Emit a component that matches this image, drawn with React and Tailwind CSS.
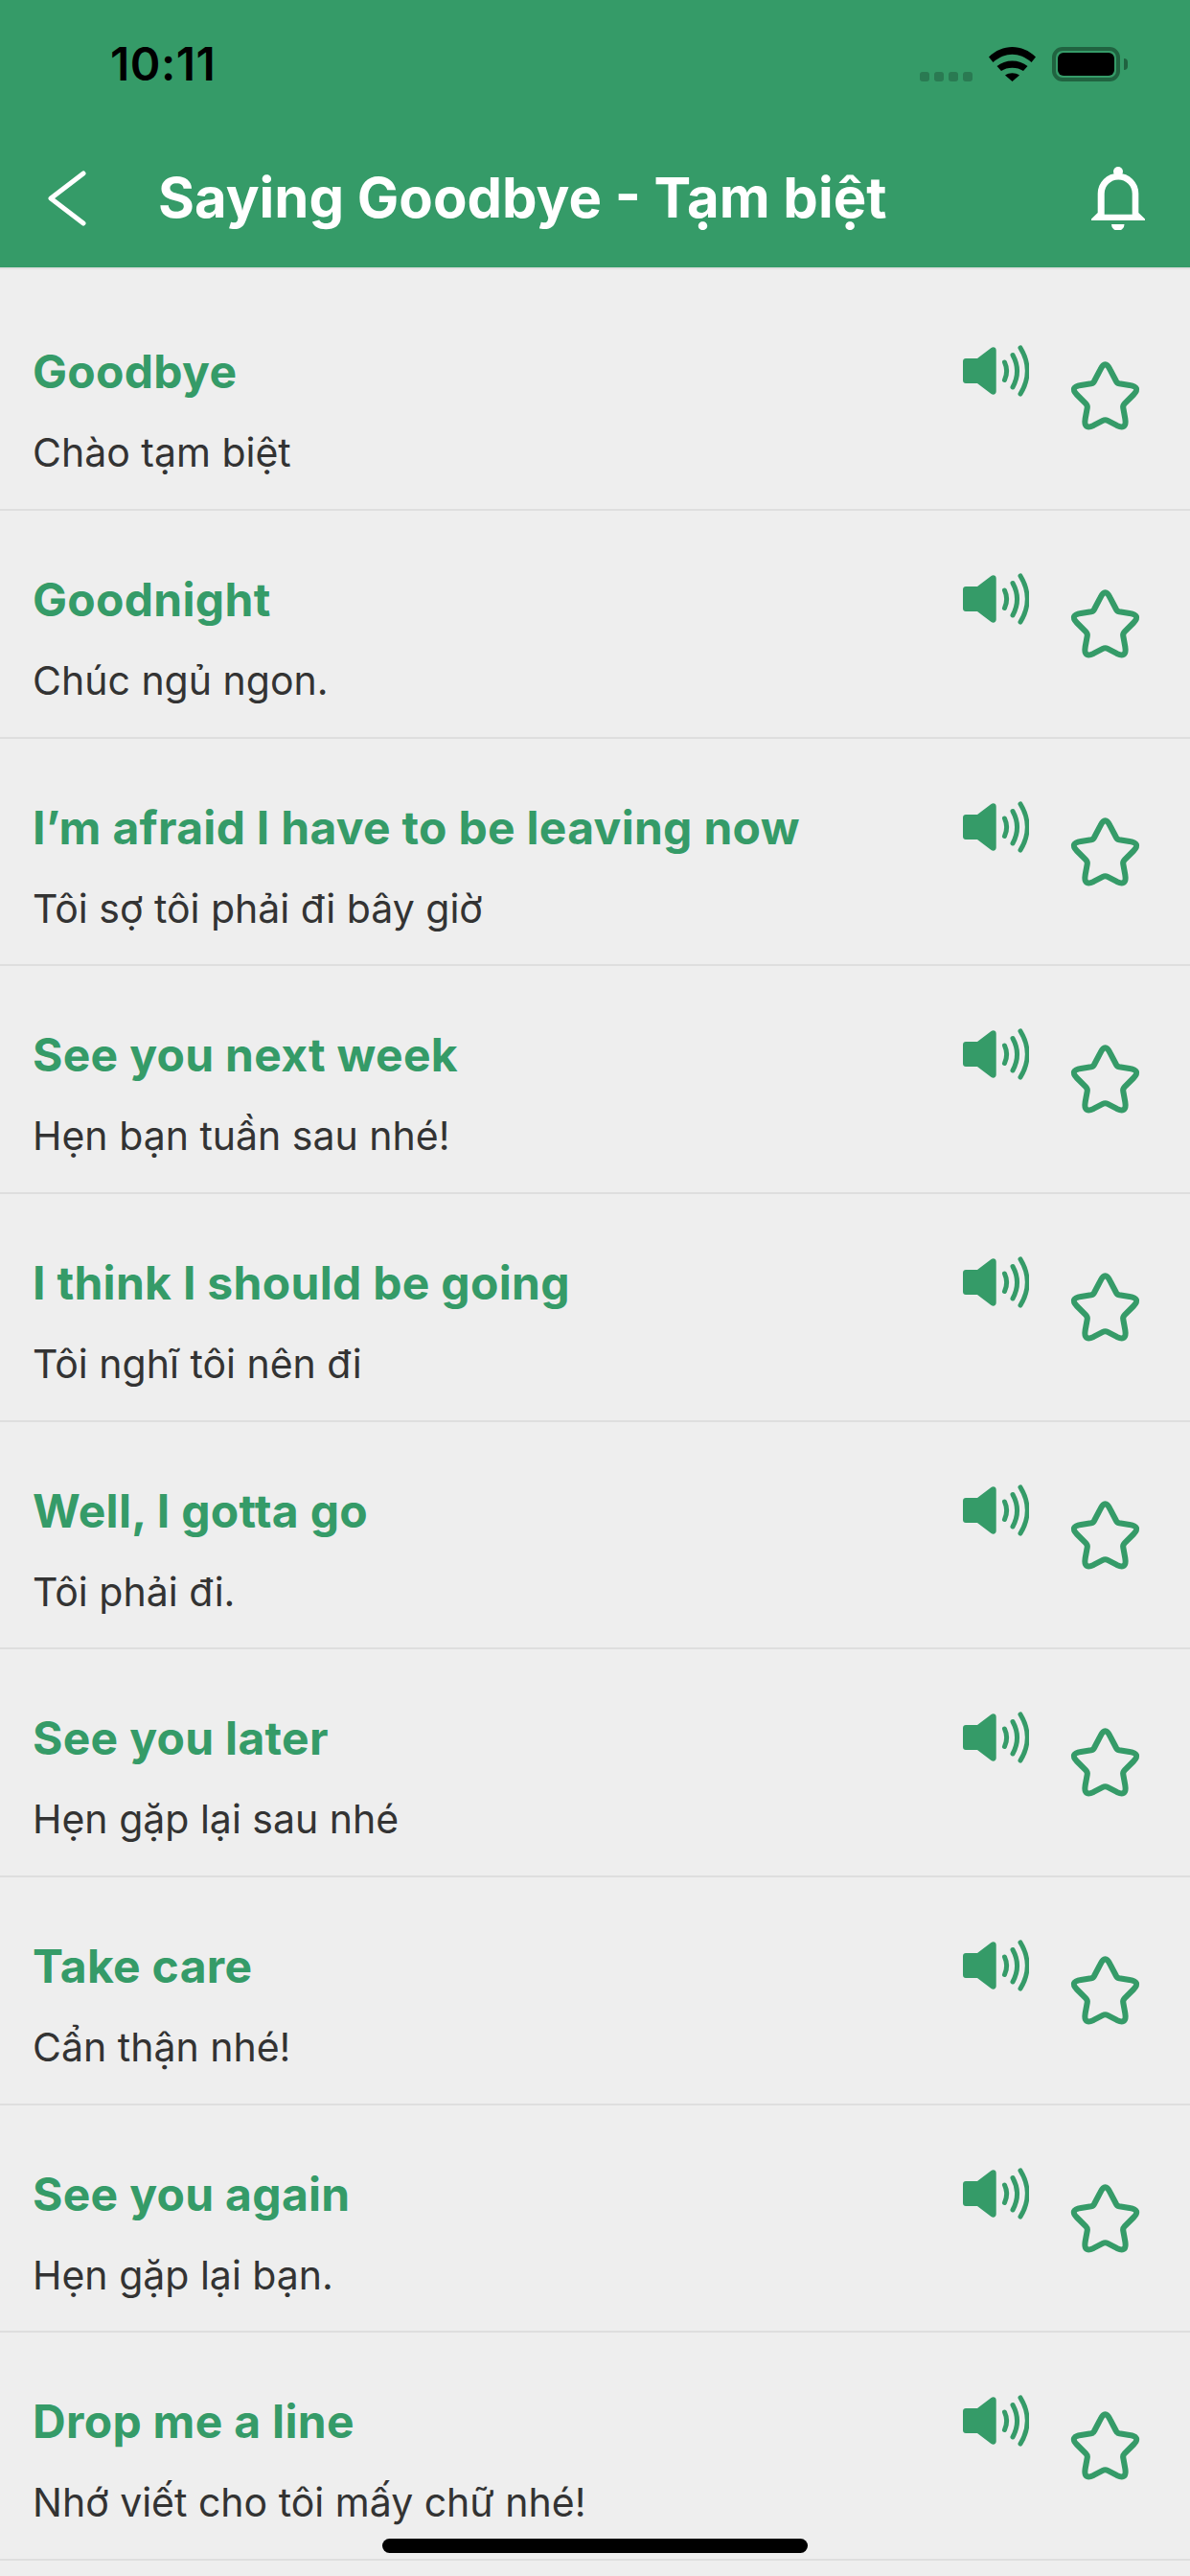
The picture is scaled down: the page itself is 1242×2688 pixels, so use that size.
import React from 'react'

const phrases = [
  ['Goodbye', 'Chào tạm biệt'],
  ['Goodnight', 'Chúc ngủ ngon.'],
  ['I’m afraid I have to be leaving now', 'Tôi sợ tôi phải đi bây giờ'],
  ['See you next week', 'Hẹn bạn tuần sau nhé!'],
  ['I think I should be going', 'Tôi nghĩ tôi nên đi'],
  ['Well, I gotta go', 'Tôi phải đi.'],
  ['See you later', 'Hẹn gặp lại sau nhé'],
  ['Take care', 'Cẩn thận nhé!'],
  ['See you again', 'Hẹn gặp lại bạn.'],
  ['Drop me a line', 'Nhớ viết cho tôi mấy chữ nhé!'],
]

function SpeakerIcon() {
  return (
    <svg viewBox="0 0 69 54" className="w-[69px] h-[54px] mt-[65px] shrink-0 text-[#359b68]" fill="none">
      <path
        d="M3 14h12L29.5 3c2.2-1.6 5.2-.6 5.2 2.4v43.2c0 3-3 4-5.2 2.4L15 40H3c-1.7 0-3-1.3-3-3V17c0-1.7 1.3-3 3-3z"
        fill="currentColor"
      />
      <g stroke="currentColor" strokeWidth="5" strokeLinecap="round">
        <path d="M43.5 18c2.8 6 2.8 12.5 0 18.5" />
        <path d="M52 10.5c6 11 6 22.500 0 33.500" />
        <path d="M60 3c9.500 15.500 9.500 32.500 0 48" />
      </g>
    </svg>
  )
}

function StarIcon() {
  return (
    <svg viewBox="0 0 70 70" className="w-[71px] h-[71px] mt-[83px] ml-[44px] shrink-0 overflow-visible text-[#359b68]" fill="none">
      <path
        d="M30 7.500Q35-3 40 7.500L46 19Q47 21.500 49.500 22L60 23.700Q72 25.500 64 33.500L55 42.500Q53 44.500 53.500 47L55.500 58Q57.500 70 47 65L37.500 60Q35 58.700 32.500 60L23 65Q12.500 70 14.500 58L16.500 47Q17 44.500 15 42.500L6 33.500Q-2 25.500 10 23.700L20.500 22Q23 21.500 24 19Z"
        stroke="currentColor"
        strokeWidth="6"
        strokeLinejoin="round"
      />
    </svg>
  )
}

function PhraseRow({ title, meaning }) {
  return (
    <div className="flex h-[237.67px] items-start border-b-2 border-[#dedede] pl-[34px] pr-[53px]">
      <div className="flex-1 min-w-0">
        <p className="mt-[62px] text-[48px] leading-[62px] font-bold tracking-[0.3px] text-[#359b68]">{title}</p>
        <p className="mt-[27px] text-[41px] leading-[52px] text-[#333333]">{meaning}</p>
      </div>
      <SpeakerIcon />
      <StarIcon />
    </div>
  )
}

function StatusBar() {
  return (
    <div className="flex items-end justify-between pt-[49px] pl-[115px] pr-[65px] h-[85px]">
      <span className="text-[48px] leading-[36px] font-semibold tracking-[0.5px] text-black">10:11</span>
      <div className="flex items-end gap-[17px]">
        <div className="flex gap-[5px]">
          <span className="w-[10px] h-[10px] rounded-[3px] bg-[#2a7a52]" />
          <span className="w-[10px] h-[10px] rounded-[3px] bg-[#2a7a52]" />
          <span className="w-[10px] h-[10px] rounded-[3px] bg-[#2a7a52]" />
          <span className="w-[10px] h-[10px] rounded-[3px] bg-[#2a7a52]" />
        </div>
        <svg viewBox="0 0 49 36" className="w-[49px] h-[36px]" fill="black">
          <path d="M0 10.500C14-3.500 35-3.500 49 10.500L44.500 16C32 5 17 5 4.500 16Z" />
          <path d="M8.500 20C17 12.500 32 12.500 40.500 20L36 25C30 20.500 19 20.500 13 25Z" />
          <path d="M17 29.500C21.500 26.500 27.500 26.500 32 29.500L24.500 36Z" />
        </svg>
        <div className="flex items-center gap-[4px]">
          <div className="w-[71px] h-[36px] rounded-[11px] border-[4px] border-[#206340] p-[2px]">
            <div className="w-full h-full rounded-[6px] bg-black" />
          </div>
          <div className="w-[4px] h-[12px] rounded-r-[4px] bg-[#206340]" />
        </div>
      </div>
    </div>
  )
}

function NavBar() {
  return (
    <div className="flex items-center h-[144px] mt-[50px] pl-[50px] pr-[47px]">
      <svg viewBox="0 0 40 58" className="w-[40px] h-[58px] shrink-0" fill="none" stroke="white" strokeWidth="5" strokeLinecap="round" strokeLinejoin="round">
        <path d="M37 3L3 29L37 55" />
      </svg>
      <h1 className="ml-[75px] -mt-[2px] text-[58px] leading-[72px] font-bold text-white">Saying Goodbye - Tạm biệt</h1>
      <svg viewBox="0 0 56 66" className="ml-auto w-[56px] h-[66px] shrink-0" fill="white">
        <circle cx="28" cy="5" r="5" />
        <path
          fillRule="evenodd"
          d="M0 56V54.500L6.700 48V28A21.300 21.300 0 0 1 49.300 28V48L56 54.500V56ZM13.700 49.700H42.700V28A14.500 14.500 0 0 0 13.700 28Z"
        />
        <path d="M21 60H34.500A6.750 6.750 0 0 1 21 60Z" />
      </svg>
    </div>
  )
}

export default function App() {
  return (
    <div className="relative h-[2688px] overflow-hidden bg-[#eeeeee] font-['Inter',sans-serif]">
      <header className="h-[281px] bg-[#359b68] border-b-2 border-[#e0e0e0]">
        <StatusBar />
        <NavBar />
      </header>
      <main className="pt-[14.33px]">
        {phrases.map(([title, meaning]) => (
          <PhraseRow key={title} title={title} meaning={meaning} />
        ))}
      </main>
      <div className="absolute bottom-[24px] left-[399px] w-[444px] h-[15px] rounded-full bg-black" />
    </div>
  )
}
